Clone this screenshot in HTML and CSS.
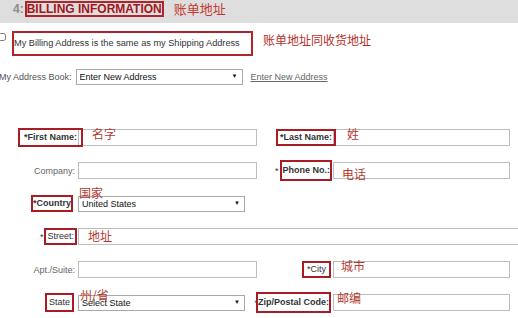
FILE: index.html
```html
<!DOCTYPE html>
<html lang="en">
<head>
  <meta charset="UTF-8" />
  <title>Billing Information</title>
  <link rel="stylesheet" href="styles.css">
</head>
<body>
  <div class="section-head">
    <span class="step">4:</span>
    <span class="title">BILLING INFORMATION</span>
    <span class="note-title">账单地址</span>
  </div>

  <div class="same-row">
    <input type="checkbox" class="same-check" />
    <span class="same-box">My Billing Address is the same as my Shipping Address</span>
    <span class="note-same">账单地址同收货地址</span>
  </div>

  <div class="book-row">
    <label class="book-label">My Address Book:</label>
    <div class="select-wrap book-select">
      <select><option>Enter New Address</option></select>
    </div>
    <a href="#" class="new-link">Enter New Address</a>
  </div>

  <div class="address-form">
    <div class="field">
      <label class="label"><span class="mark m-first">*First Name:</span></label>
      <input type="text" class="text-input" />
      <span class="note n-first">名字</span>
    </div>
    <div class="field right">
      <label class="label"><span class="mark m-last">*Last Name:</span></label>
      <input type="text" class="text-input" />
      <span class="note n-last">姓</span>
    </div>

    <div class="field">
      <label class="label plain">Company:</label>
      <input type="text" class="text-input" />
    </div>
    <div class="field right">
      <label class="label"><span class="star">*</span><span class="mark m-phone">Phone No.:</span></label>
      <input type="text" class="text-input" />
      <span class="note n-phone">电话</span>
    </div>

    <div class="field">
      <label class="label"><span class="mark m-country">*Country</span></label>
      <div class="select-wrap">
        <select><option>United States</option></select>
      </div>
      <span class="note n-country">国家</span>
    </div>

    <div class="field wide">
      <label class="label"><span class="star">*</span><span class="mark m-street">Street:</span></label>
      <input type="text" class="text-input" />
      <span class="note n-street">地址</span>
    </div>

    <div class="field">
      <label class="label plain">Apt./Suite:</label>
      <input type="text" class="text-input" />
    </div>
    <div class="field right">
      <label class="label"><span class="mark m-city">*City</span></label>
      <input type="text" class="text-input" />
      <span class="note n-city">城市</span>
    </div>

    <div class="field">
      <label class="label"><span class="mark m-state">State</span></label>
      <div class="select-wrap">
        <select><option>Select State</option></select>
      </div>
      <span class="note n-state">州/省</span>
    </div>
    <div class="field right">
      <label class="label"><span class="star star-zip">*</span><span class="mark m-zip">Zip/Postal Code:</span></label>
      <input type="text" class="text-input" />
      <span class="note n-zip">邮编</span>
    </div>
  </div>
</body>
</html>
```

FILE: styles.css
```css
* {
  box-sizing: border-box;
  margin: 0;
  padding: 0;
}
body {
  width: 518px;
  height: 318px;
  overflow: hidden;
  background: #fff;
  color: #333;
  font-family: "Liberation Sans", Arial, sans-serif;
  font-size: 9px;
}

/* section header */
.section-head {
  height: 23px;
  background: #dedede;
  display: flex;
  align-items: flex-start;
  padding: 1px 0 0 13px;
}
.step {
  padding-top: 2px;
  margin-right: 1px;
  font-size: 12px;
  line-height: 12px;
  font-weight: bold;
  color: #8c8c8c;
}
.title {
  border: 2px solid #b3232a;
  font-size: 12px;
  line-height: 12px;
  font-weight: bold;
  color: #a3161c;
}
.note-title {
  margin-left: 10px;
  font-family: "Noto Sans CJK SC", sans-serif;
  font-size: 13px;
  line-height: 16px;
  color: #c43a32;
}

/* same as shipping */
.same-row {
  display: flex;
  align-items: flex-start;
  margin-top: 8px;
}
.same-check {
  width: 8px;
  height: 8px;
  margin: 2px 6px 0 -2px;
}
.same-box {
  width: 241px;
  height: 25px;
  padding-top: 5px;
  border: 2px solid #b3232a;
  font-size: 9.2px;
  line-height: 11px;
  white-space: nowrap;
  overflow: hidden;
  color: #333;
}
.note-same {
  margin: 2px 0 0 10px;
  font-family: "Noto Sans CJK SC", sans-serif;
  font-size: 12px;
  line-height: 14px;
  color: #b5302c;
}

/* address book */
.book-row {
  display: flex;
  align-items: center;
  height: 16px;
  margin-top: 13px;
}
.book-label {
  flex-shrink: 0;
  margin-left: -1px;
  margin-right: 4px;
  color: #555;
  white-space: nowrap;
}
.select-wrap {
  position: relative;
  flex-shrink: 0;
  width: 167px;
  height: 16px;
}
.select-wrap select {
  appearance: none;
  width: 100%;
  height: 100%;
  padding-left: 3px;
  border: 1px solid #a9a9a9;
  background: #fff;
  color: #111;
  font-family: "Liberation Sans", Arial, sans-serif;
  font-size: 9px;
}
.select-wrap::after {
  content: "▼";
  position: absolute;
  right: 5px;
  top: 4px;
  font-size: 6px;
  color: #111;
  pointer-events: none;
}
.new-link {
  margin-left: 8px;
  color: #666;
  text-decoration: underline;
  white-space: nowrap;
}

/* form grid */
.address-form {
  display: grid;
  grid-template-columns: 258px 260px;
  grid-auto-rows: 17px;
  row-gap: 16px;
  margin-top: 44px;
}
.field {
  position: relative;
  display: flex;
  align-items: center;
}
.field.wide {
  grid-column: 1 / 3;
}
.label {
  flex: 0 0 78px;
  min-width: 0;
  display: flex;
  justify-content: flex-end;
  align-items: center;
  white-space: nowrap;
  font-weight: bold;
  color: #333;
}
.field.right .label {
  flex-basis: 75px;
}
.label.plain {
  padding-right: 3px;
  font-weight: normal;
  color: #666;
}
.text-input {
  flex-shrink: 0;
  width: 179px;
  height: 17px;
  border: 1px solid #bdbdbd;
  background: #fff;
}
.field.right .text-input {
  width: 177px;
}
.field.wide .text-input {
  width: 445px;
}
.star {
  margin-right: 1px;
  font-weight: normal;
  color: #333;
}
.star-zip {
  margin-right: -2px;
}

/* red marks around labels */
.mark {
  position: relative;
  z-index: 1;
  border: 2px solid #a91c23;
  padding: 1px 0;
  line-height: 11px;
}
.m-first { padding: 2px 4px; margin-right: -5px; }
.m-last { padding: 1px 2px; margin-right: -3px; }
.m-phone { padding: 3px 0 3px 1px; margin-right: 1px; }
.m-country { padding: 1px 0; margin-right: 5px; }
.m-street { padding: 1px 1px; margin-right: 1px; font-weight: normal; }
.m-city { padding: 1px 3px; margin-right: 2px; font-weight: normal; }
.m-state { padding: 2px 2px; margin-right: 4px; font-weight: normal; }
.m-zip { padding: 3px 0; margin-right: 2px; }

/* chinese notes */
.note {
  position: absolute;
  z-index: 2;
  font-family: "Noto Sans CJK SC", sans-serif;
  font-size: 12px;
  line-height: 12px;
  color: #b03a30;
  white-space: nowrap;
}
.n-first { left: 92px; top: -1px; }
.n-last { left: 89px; top: -1px; }
.n-phone { left: 84px; top: 6px; }
.n-country { left: 79px; top: -8px; }
.n-street { left: 88px; top: 2px; }
.n-city { left: 83px; top: -1px; }
.n-state { left: 80px; top: -5px; }
.n-zip { left: 79px; top: -2px; }
```
